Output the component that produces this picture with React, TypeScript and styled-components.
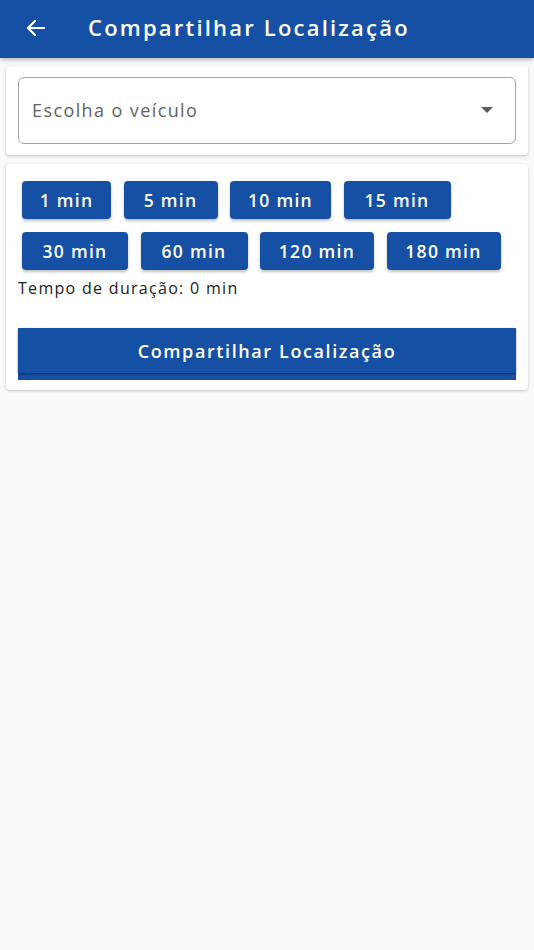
import styled, { createGlobalStyle } from 'styled-components';

const GlobalStyle = createGlobalStyle`
  html, body {
    margin: 0;
    padding: 0;
    background: #f9f9f9;
    font-family: 'Open Sans', 'Liberation Sans', sans-serif;
  }
`;

const BLUE = '#1650a4';

const Page = styled.div`
  min-height: 950px;
  background: #f9f9f9;
`;

const AppBar = styled.header`
  height: 58px;
  background: ${BLUE};
  display: flex;
  align-items: center;
  padding: 0 0 2px 22px;
  box-sizing: border-box;
  box-shadow: 0 2px 4px rgba(0, 0, 0, 0.25);
  position: relative;
`;

const BackButton = styled.button`
  width: 28px;
  height: 28px;
  border: none;
  background: none;
  padding: 0;
  display: flex;
  align-items: center;
  justify-content: center;
  color: #fff;
`;

const Title = styled.h1`
  margin: 0 0 3px 38px;
  color: #fff;
  font-size: 22px;
  font-weight: 600;
  letter-spacing: 2.2px;
`;

const Content = styled.main`
  padding: 8px 6px;
  display: flex;
  flex-direction: column;
  gap: 9px;
`;

const Card = styled.section<{ $pad: string }>`
  background: #fff;
  border-radius: 4px;
  box-shadow: 0 1px 3px rgba(0, 0, 0, 0.22);
  padding: ${(p) => p.$pad};
`;

const SelectBox = styled.div`
  height: 67px;
  border: 1px solid #a3a3a3;
  border-radius: 6px;
  display: flex;
  align-items: center;
  justify-content: space-between;
  padding: 0 22px 2px 13px;
  box-sizing: border-box;
`;

const Placeholder = styled.span`
  font-size: 18px;
  color: #626262;
  letter-spacing: 1.4px;
`;

const Caret = styled.span`
  width: 0;
  height: 0;
  border-left: 6px solid transparent;
  border-right: 6px solid transparent;
  border-top: 6px solid #5c5c5c;
`;

const ChipGrid = styled.div`
  display: flex;
  flex-wrap: wrap;
  gap: 13px 12.5px;
  padding: 0 4px;
`;

const Chip = styled.button<{ $w: number }>`
  width: ${(p) => p.$w}px;
  height: 38px;
  border: none;
  border-radius: 4px;
  background: ${BLUE};
  color: #fff;
  font-family: inherit;
  font-size: 17.5px;
  font-weight: 600;
  letter-spacing: 1.3px;
  box-shadow: 0 2px 3px rgba(0, 0, 0, 0.25);
  padding: 0 0 1px;
`;

const Duration = styled.p`
  margin: 7px 0 0;
  font-size: 16px;
  color: #222;
  letter-spacing: 1.3px;
`;

const ShareWrap = styled.div`
  margin-top: 29px;
  background: ${BLUE};
  height: 52px;
`;

const ShareButton = styled.button`
  width: 100%;
  height: 45px;
  border: none;
  background: ${BLUE};
  color: #fff;
  font-family: inherit;
  font-size: 18px;
  font-weight: 600;
  letter-spacing: 1.6px;
  box-shadow: 0 1px 2px rgba(0, 0, 0, 0.45);
`;

const options = [
  { label: '1 min', w: 89 },
  { label: '5 min', w: 94 },
  { label: '10 min', w: 101 },
  { label: '15 min', w: 107 },
  { label: '30 min', w: 106 },
  { label: '60 min', w: 107 },
  { label: '120 min', w: 114 },
  { label: '180 min', w: 114 },
];

export default function App() {
  return (
    <Page>
      <GlobalStyle />
      <AppBar>
        <BackButton aria-label="Voltar">
          <svg width="24" height="24" viewBox="0 0 24 24" fill="none" stroke="#fff" strokeWidth="2.2" strokeLinecap="round" strokeLinejoin="round">
            <path d="M20 12H4" />
            <path d="M11 5l-7 7 7 7" />
          </svg>
        </BackButton>
        <Title>Compartilhar Localização</Title>
      </AppBar>
      <Content>
        <Card $pad="11px 12px">
          <SelectBox>
            <Placeholder>Escolha o veículo</Placeholder>
            <Caret />
          </SelectBox>
        </Card>
        <Card $pad="17px 12px 10px">
          <ChipGrid>
            {options.map((o) => (
              <Chip key={o.label} $w={o.w}>
                {o.label}
              </Chip>
            ))}
          </ChipGrid>
          <Duration>Tempo de duração: 0 min</Duration>
          <ShareWrap>
            <ShareButton>Compartilhar Localização</ShareButton>
          </ShareWrap>
        </Card>
      </Content>
    </Page>
  );
}
